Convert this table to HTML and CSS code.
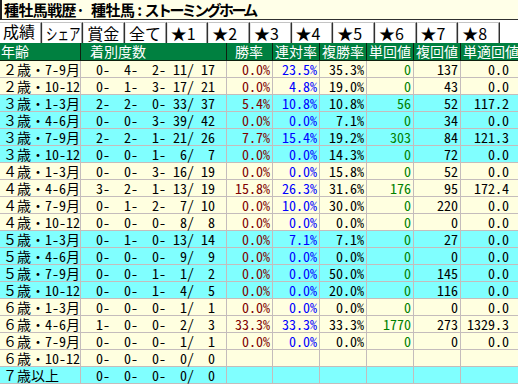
FILE: index.html
```html
<!DOCTYPE html>
<html lang="ja">
<head>
<meta charset="utf-8">
<title>種牡馬戦歴</title>
<link rel="stylesheet" href="styles.css">
</head>
<body>
<div class="title">種牡馬戦歴<span class="dot">·</span> 種牡馬<span class="colon">:</span><span class="kana">ストーミングホーム</span></div>
<div class="tabs">
  <div class="tab active">成績</div>
  <div class="tab"><span class="narrow">シェア</span></div>
  <div class="tab">賞金</div>
  <div class="tab">全て</div>
  <div class="tab">★1</div>
  <div class="tab">★2</div>
  <div class="tab">★3</div>
  <div class="tab">★4</div>
  <div class="tab">★5</div>
  <div class="tab">★6</div>
  <div class="tab">★7</div>
  <div class="tab">★8</div>
</div>
<div class="table">
  <div class="row head">
    <div class="h h1">年齢</div><div class="h h2">着別度数</div><div class="h h3">勝率</div><div class="h">連対率</div><div class="h">複勝率</div><div class="h">単回値</div><div class="h">複回値</div><div class="h">単適回値</div>
  </div>
  <div class="row y"><div class="d age">２歳・7-9月</div><div class="d rec"> 0-  4-  2- 11/ 17</div><div class="d n red">0.0%</div><div class="d n blue">23.5%</div><div class="d n">35.3%</div><div class="d n grn">0</div><div class="d n">137</div><div class="d n last">0.0</div></div>
  <div class="row y"><div class="d age">２歳・10-12</div><div class="d rec"> 0-  1-  3- 17/ 21</div><div class="d n red">0.0%</div><div class="d n blue">4.8%</div><div class="d n">19.0%</div><div class="d n grn">0</div><div class="d n">43</div><div class="d n last">0.0</div></div>
  <div class="row c"><div class="d age">３歳・1-3月</div><div class="d rec"> 2-  2-  0- 33/ 37</div><div class="d n red">5.4%</div><div class="d n blue">10.8%</div><div class="d n">10.8%</div><div class="d n grn">56</div><div class="d n">52</div><div class="d n last">117.2</div></div>
  <div class="row c"><div class="d age">３歳・4-6月</div><div class="d rec"> 0-  0-  3- 39/ 42</div><div class="d n red">0.0%</div><div class="d n blue">0.0%</div><div class="d n">7.1%</div><div class="d n grn">0</div><div class="d n">34</div><div class="d n last">0.0</div></div>
  <div class="row c"><div class="d age">３歳・7-9月</div><div class="d rec"> 2-  2-  1- 21/ 26</div><div class="d n red">7.7%</div><div class="d n blue">15.4%</div><div class="d n">19.2%</div><div class="d n grn">303</div><div class="d n">84</div><div class="d n last">121.3</div></div>
  <div class="row c"><div class="d age">３歳・10-12</div><div class="d rec"> 0-  0-  1-  6/  7</div><div class="d n red">0.0%</div><div class="d n blue">0.0%</div><div class="d n">14.3%</div><div class="d n grn">0</div><div class="d n">72</div><div class="d n last">0.0</div></div>
  <div class="row y"><div class="d age">４歳・1-3月</div><div class="d rec"> 0-  0-  3- 16/ 19</div><div class="d n red">0.0%</div><div class="d n blue">0.0%</div><div class="d n">15.8%</div><div class="d n grn">0</div><div class="d n">52</div><div class="d n last">0.0</div></div>
  <div class="row y"><div class="d age">４歳・4-6月</div><div class="d rec"> 3-  2-  1- 13/ 19</div><div class="d n red">15.8%</div><div class="d n blue">26.3%</div><div class="d n">31.6%</div><div class="d n grn">176</div><div class="d n">95</div><div class="d n last">172.4</div></div>
  <div class="row y"><div class="d age">４歳・7-9月</div><div class="d rec"> 0-  1-  2-  7/ 10</div><div class="d n red">0.0%</div><div class="d n blue">10.0%</div><div class="d n">30.0%</div><div class="d n grn">0</div><div class="d n">220</div><div class="d n last">0.0</div></div>
  <div class="row y"><div class="d age">４歳・10-12</div><div class="d rec"> 0-  0-  0-  8/  8</div><div class="d n red">0.0%</div><div class="d n blue">0.0%</div><div class="d n">0.0%</div><div class="d n grn">0</div><div class="d n">0</div><div class="d n last">0.0</div></div>
  <div class="row c"><div class="d age">５歳・1-3月</div><div class="d rec"> 0-  1-  0- 13/ 14</div><div class="d n red">0.0%</div><div class="d n blue">7.1%</div><div class="d n">7.1%</div><div class="d n grn">0</div><div class="d n">27</div><div class="d n last">0.0</div></div>
  <div class="row c"><div class="d age">５歳・4-6月</div><div class="d rec"> 0-  0-  0-  9/  9</div><div class="d n red">0.0%</div><div class="d n blue">0.0%</div><div class="d n">0.0%</div><div class="d n grn">0</div><div class="d n">0</div><div class="d n last">0.0</div></div>
  <div class="row c"><div class="d age">５歳・7-9月</div><div class="d rec"> 0-  0-  1-  1/  2</div><div class="d n red">0.0%</div><div class="d n blue">0.0%</div><div class="d n">50.0%</div><div class="d n grn">0</div><div class="d n">145</div><div class="d n last">0.0</div></div>
  <div class="row c"><div class="d age">５歳・10-12</div><div class="d rec"> 0-  0-  1-  4/  5</div><div class="d n red">0.0%</div><div class="d n blue">0.0%</div><div class="d n">20.0%</div><div class="d n grn">0</div><div class="d n">116</div><div class="d n last">0.0</div></div>
  <div class="row y"><div class="d age">６歳・1-3月</div><div class="d rec"> 0-  0-  0-  1/  1</div><div class="d n red">0.0%</div><div class="d n blue">0.0%</div><div class="d n">0.0%</div><div class="d n grn">0</div><div class="d n">0</div><div class="d n last">0.0</div></div>
  <div class="row y"><div class="d age">６歳・4-6月</div><div class="d rec"> 1-  0-  0-  2/  3</div><div class="d n red">33.3%</div><div class="d n blue">33.3%</div><div class="d n">33.3%</div><div class="d n grn">1770</div><div class="d n">273</div><div class="d n last">1329.3</div></div>
  <div class="row y"><div class="d age">６歳・7-9月</div><div class="d rec"> 0-  0-  0-  1/  1</div><div class="d n red">0.0%</div><div class="d n blue">0.0%</div><div class="d n">0.0%</div><div class="d n grn">0</div><div class="d n">0</div><div class="d n last">0.0</div></div>
  <div class="row y"><div class="d age">６歳・10-12</div><div class="d rec"> 0-  0-  0-  0/  0</div><div class="d n"></div><div class="d n"></div><div class="d n"></div><div class="d n"></div><div class="d n"></div><div class="d n last"></div></div>
  <div class="row c"><div class="d age">７歳以上</div><div class="d rec"> 0-  0-  0-  0/  0</div><div class="d n"></div><div class="d n"></div><div class="d n"></div><div class="d n"></div><div class="d n"></div><div class="d n last"></div></div>
</div>
</body>
</html>
```

FILE: styles.css
```css
html, body {
  margin: 0;
  padding: 0;
}
body {
  width: 518px;
  height: 384px;
  overflow: hidden;
  background: #ffffff;
  font-family: "Noto Sans Mono CJK JP", "Noto Sans CJK JP", monospace;
  color: #000000;
}
.title {
  height: 19px;
  box-sizing: content-box;
  background: #ffffe8;
  border-left: 2px solid #202020;
  border-bottom: 1px solid #303030;
  margin-bottom: 2px;
  padding-left: 2px;
  font-family: "Noto Sans CJK JP", sans-serif;
  font-weight: bold;
  font-size: 15px;
  letter-spacing: -0.6px;
  line-height: 19px;
  white-space: nowrap;
}
.title .dot {
  margin-right: 4px;
}
.title .colon {
  padding: 0 3px;
}
.title .kana {
  letter-spacing: -2.6px;
}
.tabs {
  display: flex;
  height: 21px;
}
.tab {
  width: 41.67px;
  flex: none;
  box-sizing: border-box;
  height: 21px;
  background: #ffffff;
  border-top: 1px solid #c4c4c4;
  border-left: 1px solid #e4e4e4;
  border-right: 1px solid #303030;
  box-shadow: inset -1px 0 0 #a0a0a0;
  padding: 2px 0 0 3px;
  font-family: "Noto Sans CJK JP", sans-serif;
  font-size: 16px;
  line-height: 16px;
  white-space: nowrap;
}
.tab.active {
  border-left: none;
  padding: 0 0 0 3px;
}
.narrow {
  display: inline-block;
  transform: scaleX(0.72);
  transform-origin: 0 50%;
}
.table {
  width: 525px;
}
.row {
  display: grid;
  grid-template-columns: 81px 146px 46px 47px 47px 47px 47px 64px;
  height: 17px;
}
.row.head {
  height: 18px;
  background: #008040;
}
.row.y {
  background: #ffffe0;
}
.row.c {
  background: #80ffff;
}
.h {
  box-sizing: border-box;
  border-right: 1px solid #102010;
  border-bottom: 1px solid #102010;
  color: #ffffff;
  font-family: "Noto Sans CJK JP", sans-serif;
  font-size: 14px;
  line-height: 17px;
  padding-left: 2px;
  white-space: nowrap;
}
.h1 {
  padding-left: 1px;
}
.h2 {
  padding-left: 9px;
}
.h3 {
  padding-left: 8px;
}
.d {
  box-sizing: border-box;
  border-right: 1px solid #c4bcbc;
  border-bottom: 1px solid #c4bcbc;
  font-size: 14px;
  line-height: 16px;
  white-space: pre;
}
.age {
  padding-left: 3px;
}
.rec {
  padding-left: 8px;
  font-feature-settings: "hwid";
}
.n {
  text-align: right;
  padding-right: 2px;
  font-feature-settings: "hwid";
}
.n.last {
  padding-right: 15px;
}
.red {
  color: #800000;
}
.blue {
  color: #0000ff;
}
.grn {
  color: #008000;
}
```
